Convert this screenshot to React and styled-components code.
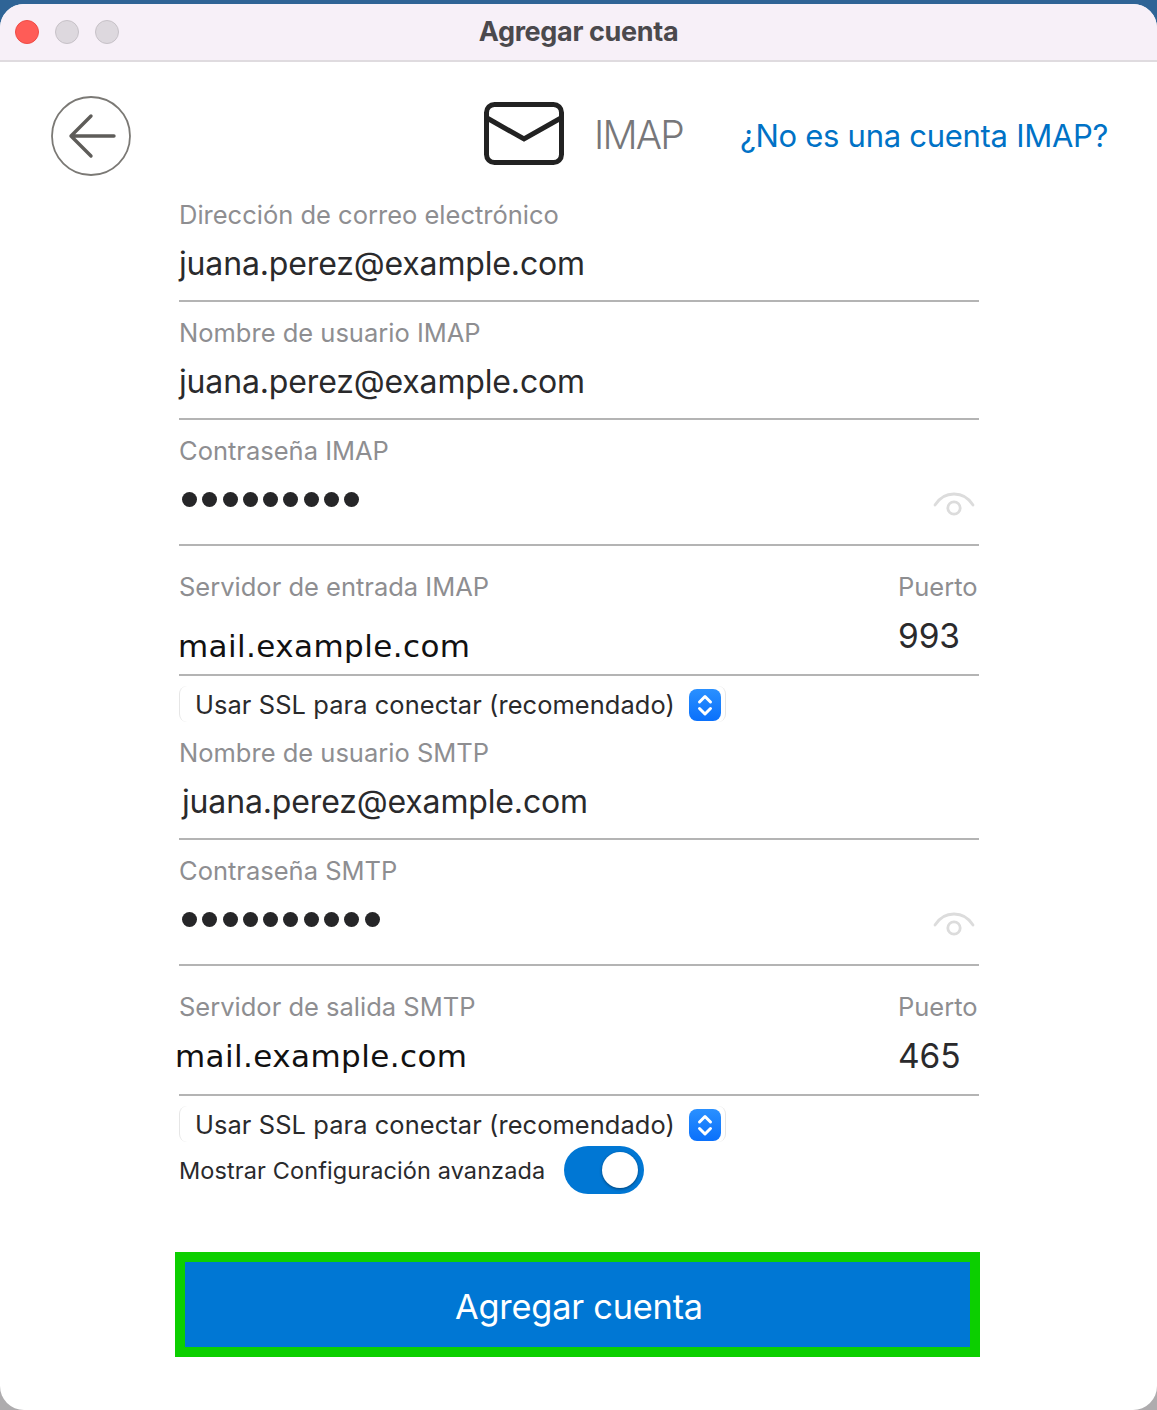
import React from "react";
import styled, { createGlobalStyle } from "styled-components";

const Global = createGlobalStyle`
  html, body { margin: 0; padding: 0; }
  body {
    height: 1410px;
    overflow: hidden;
    background: linear-gradient(to bottom, #2f6496 0 50%, #aeacae 50% 100%);
    font-family: Inter, "Liberation Sans", sans-serif;
  }
`;
const Win = styled.div`
  margin-top: 4px; height: 1406px; background: #fff; border-radius: 24px; overflow: hidden;
`;
const TitleBar = styled.div`
  height: 58px; box-sizing: border-box; background: #f7f0f8; border-bottom: 2px solid #dfdbdf;
  display: grid; grid-template-columns: 1fr auto 1fr; align-items: center; padding: 0 15px 1px;
`;
const Lights = styled.div`display: flex; gap: 16px;`;
const Light = styled.span`
  width: 24px; height: 24px; box-sizing: border-box; border-radius: 50%;
  background: ${p => p.$red ? "#ff5c57" : "#ddd8de"};
  border: 1px solid ${p => p.$red ? "#ee4b45" : "#c6c1c7"};
`;
const Title = styled.div`
  font-size: 27px; font-weight: 700; color: #4b494d; letter-spacing: -0.35px; line-height: 54px;
`;
const Header = styled.div`
  height: 135px; box-sizing: border-box; padding: 34px 0 0 51px; display: flex; align-items: flex-start;
`;
const BackIcon = styled.svg`width: 80px; height: 80px; flex: none;`;
const MailIcon = styled.svg`width: 80px; height: 64px; flex: none; margin: 6px 0 0 353px;`;
const Proto = styled.div`
  margin-left: 30px; font-size: 39px; font-weight: 300; color: #77777a; line-height: 78px; letter-spacing: -1.8px;
`;
const Link = styled.a`
  margin-left: 57px; font-size: 31px; color: #0072c6; line-height: 80px; letter-spacing: -0.28px; white-space: nowrap;
`;
const Main = styled.div`margin-left: 175px; width: 805px;`;
const Form = styled.div`padding: 0 1px 0 4px;`;
const Field = styled.div`
  padding-top: ${p => p.$top}px;
  padding-bottom: ${p => p.$bottom}px;
  border-bottom: 2px solid #b4b4b4;
`;
const Row = styled.div`display: grid; grid-template-columns: 1fr 81px;`;
const Label = styled.div`
  font-size: 25.5px; line-height: 36px; color: #8e8e91; white-space: nowrap;
`;
const Value = styled.div`
  font-size: 32px; line-height: 62px; color: #2a2a2c; letter-spacing: -0.15px; white-space: nowrap;
  margin-left: ${p => p.$indent || 0}px;
`;
const Port = styled.div`
  font-size: 33.5px; line-height: 62px; color: #2a2a2c; letter-spacing: -0.1px; white-space: nowrap;
`;
const Server = styled.div`
  font-family: "DejaVu Sans", sans-serif; font-size: 31px; line-height: 62px; color: #111;
  white-space: nowrap; letter-spacing: 0.42px;
  padding-top: ${p => p.$shift}px; margin-left: ${p => p.$indent}px;
  height: ${p => 62 - p.$shift}px;
`;
const PassRow = styled.div`
  display: flex; justify-content: space-between; align-items: flex-start; height: 60px;
`;
const Dots = styled.div`
  display: flex; gap: 5.3px; margin: 23px 0 0 3px;
`;
const Dot = styled.span`
  width: 15px; height: 15px; border-radius: 50%; background: #262628;
`;
const Eye = styled.svg`width: 42px; height: 30px; margin: 22px 4px 0 0; flex: none;`;
const Select = styled.div`
  height: 36px; width: 547px; box-sizing: border-box; display: flex; align-items: center; gap: 14px; padding-left: 15px;
  border-left: 1px solid #e6e6e6; border-right: 1px solid #e6e6e6; border-radius: 8px;
  font-size: 25.4px; color: #2a2a2c; letter-spacing: 0.1px; white-space: nowrap;
  margin-top: 10px;
`;
const Stepper = styled.span`
  width: 32px; height: 32px; border-radius: 8px; flex: none; display: flex; align-items: center; justify-content: center;
  background: linear-gradient(to bottom, #2a90ff, #0a70fb); margin-top: 1px;
`;
const ToggleRow = styled.div`
  display: flex; align-items: center; gap: 19px; height: 48px; margin-top: 4px;
  font-size: 23.5px; color: #2a2a2c; white-space: nowrap; letter-spacing: 0.1px;
`;
const Toggle = styled.span`
  width: 80px; height: 48px; border-radius: 24px; background: #0077d4; flex: none;
  display: flex; align-items: center; justify-content: flex-end; padding-right: 6px; box-sizing: border-box;
`;
const Knob = styled.span`
  width: 36px; height: 36px; border-radius: 50%; background: #fff; box-shadow: 0 1px 3px rgba(0,0,0,.45);
`;
const Submit = styled.button`
  display: block; width: 805px; height: 105px; margin-top: 58px; box-sizing: border-box;
  border: 10px solid #0ccf00; background: #0077d4; color: #fff;
  font-family: inherit; font-size: 34.3px; letter-spacing: -0.2px; padding: 3px 0 0 3px;
`;

const Chevrons = () => (
  <svg width="32" height="32" viewBox="0 0 32 32" fill="none" stroke="#fff" strokeWidth="3" strokeLinecap="round" strokeLinejoin="round">
    <path d="M10.5 13 16 7.5 21.5 13" />
    <path d="M10.5 19.5 16 25 21.5 19.5" />
  </svg>
);
const EyeIcon = () => (
  <Eye viewBox="0 0 42 30" fill="none" stroke="#dcdcdc" strokeWidth="2.8" strokeLinecap="round">
    <path d="M2 14C7 6 13 3 21 3s14 3 19 11" />
    <circle cx="21" cy="17" r="6.2" />
  </Eye>
);
const Password = ({ n }) => (
  <PassRow>
    <Dots aria-label="contraseña">{Array.from({ length: n }, (_, i) => <Dot key={i} />)}</Dots>
    <EyeIcon />
  </PassRow>
);

export default function App() {
  return (
    <>
      <Global />
      <Win>
        <TitleBar>
          <Lights><Light $red /><Light /><Light /></Lights>
          <Title>Agregar cuenta</Title>
        </TitleBar>
        <Header>
          <BackIcon viewBox="0 0 80 80" fill="none">
            <circle cx="40" cy="40" r="39" stroke="#7b7975" strokeWidth="1.8" />
            <path d="M20 40H63M40 20 20 40 40 60" stroke="#5e5c59" strokeWidth="3.4" strokeLinecap="round" strokeLinejoin="round" />
          </BackIcon>
          <MailIcon viewBox="0 0 80 64" fill="none" stroke="#222" strokeWidth="5">
            <rect x="2.5" y="2.5" width="75" height="58" rx="8" />
            <path d="M3 16 40 37 77 16" />
          </MailIcon>
          <Proto>IMAP</Proto>
          <Link>¿No es una cuenta IMAP?</Link>
        </Header>
        <Main>
          <Form>
            <Field $top={0} $bottom={5}>
              <Label>Dirección de correo electrónico</Label>
              <Value>juana.perez@example.com</Value>
            </Field>
            <Field $top={13} $bottom={5}>
              <Label>Nombre de usuario IMAP</Label>
              <Value>juana.perez@example.com</Value>
            </Field>
            <Field $top={13} $bottom={15}>
              <Label>Contraseña IMAP</Label>
              <Password n={9} />
            </Field>
            <Field $top={23} $bottom={7}>
              <Row>
                <div>
                  <Label>Servidor de entrada IMAP</Label>
                  <Server $indent={-1} $shift={10}>mail.example.com</Server>
                </div>
                <div>
                  <Label>Puerto</Label>
                  <Port>993</Port>
                </div>
              </Row>
            </Field>
            <Select>Usar SSL para conectar (recomendado)<Stepper><Chevrons /></Stepper></Select>
            <Field $top={13} $bottom={5}>
              <Label>Nombre de usuario SMTP</Label>
              <Value $indent={3}>juana.perez@example.com</Value>
            </Field>
            <Field $top={13} $bottom={15}>
              <Label>Contraseña SMTP</Label>
              <Password n={10} />
            </Field>
            <Field $top={23} $bottom={7}>
              <Row>
                <div>
                  <Label>Servidor de salida SMTP</Label>
                  <Server $indent={-4} $shift={0}>mail.example.com</Server>
                </div>
                <div>
                  <Label>Puerto</Label>
                  <Port>465</Port>
                </div>
              </Row>
            </Field>
            <Select>Usar SSL para conectar (recomendado)<Stepper><Chevrons /></Stepper></Select>
            <ToggleRow>Mostrar Configuración avanzada<Toggle><Knob /></Toggle></ToggleRow>
          </Form>
          <Submit>Agregar cuenta</Submit>
        </Main>
      </Win>
    </>
  );
}
